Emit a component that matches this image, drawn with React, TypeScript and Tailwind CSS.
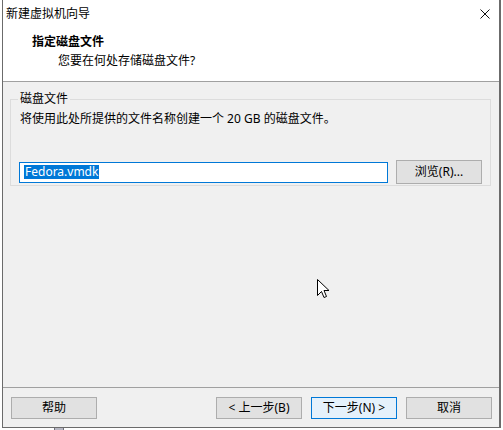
import React from 'react';

const font = "font-['Noto_Sans','Noto_Sans_CJK_SC',sans-serif]";

interface BtnProps {
  label: string;
  isDefault?: boolean;
  className?: string;
}

const Btn: React.FC<BtnProps> = ({ label, isDefault = false, className = '' }) => {
  const cls = [
    'h-[22px] w-[86px] flex items-center justify-center text-[12px] leading-none text-black',
    isDefault ? 'border border-[#0078d7] bg-[#e5f1fb]' : 'border border-[#adadad] bg-[#e1e1e1]',
    className
  ]
    .filter(Boolean)
    .join(' ');
  return (
    <button type="button" className={cls}>
      {label}
    </button>
  );
};

const CloseIcon = () => (
  <svg width="10" height="10" viewBox="0 0 10 10" className="block">
    <path d="M0.5 0.5 L9.5 9.5 M9.5 0.5 L0.5 9.5" stroke="#111" strokeWidth="1" />
  </svg>
);

const Cursor = () => (
  <svg width="13" height="20" viewBox="0 0 13 20" className="block">
    <path
      d="M0.5 0.5 L0.5 16.5 L4.5 12.5 L7 18.5 L9.5 17.5 L7 11.5 L12 11.5 Z"
      fill="#fff"
      stroke="#000"
      strokeWidth="1"
      strokeLinejoin="miter"
    />
  </svg>
);

export default function App() {
  return (
    <div className={`w-[503px] h-[430px] bg-white overflow-hidden relative ${font}`}>
      {/* dialog window */}
      <div className="ml-[2px] w-[499px] h-[428px] border-l border-r-2 border-b border-[#6b6b6b] bg-[#f0f0f0] flex flex-col">
        {/* header */}
        <div className="h-[81px] bg-white relative shrink-0">
          <div className="pt-[6px] pl-[3px] h-[22px] text-[12px] leading-[16px] text-black">新建虚拟机向导</div>
          <div className="absolute left-[477px] top-[9px]">
            <CloseIcon />
          </div>
          <div className="mt-[12px] pl-[29px] text-[12px] leading-[16px] font-bold text-black">指定磁盘文件</div>
          <div className="mt-[3px] pl-[55px] text-[12px] leading-[16px] text-black">您要在何处存储磁盘文件?</div>
        </div>
        <div className="h-px bg-[#a0a0a0] shrink-0" />

        {/* body */}
        <div className="flex-1 flex flex-col">
          <div className="relative mt-[17px] ml-[7px] w-[481px] h-[87px] border border-[#dcdcdc]">
            <span className="absolute left-[7px] top-[-9px] px-[2px] bg-[#f0f0f0] text-[12px] leading-[16px] text-black">
              磁盘文件
            </span>
            <div className="mt-[11px] ml-[9px] text-[12px] leading-[16px] text-black">
              将使用此处所提供的文件名称创建一个 20 GB 的磁盘文件。
            </div>
            <div className="mt-[33px] ml-[8px] flex items-center gap-[8px]">
              <div className="w-[369px] h-[21px] border border-[#0078d7] bg-white flex items-center pl-[4px]">
                <span className="bg-[#0078d7] text-white text-[12px] leading-[14px] h-[14px] px-px">Fedora.vmdk</span>
              </div>
              <Btn label="浏览(R)..." className="h-[24px]" />
            </div>
          </div>
        </div>

        {/* footer */}
        <div className="h-px bg-[#a0a0a0] shrink-0" />
        <div className="h-[39px] shrink-0 flex pt-[9px] pl-[8px]">
          <Btn label="帮助" />
          <Btn label="< 上一步(B)" className="ml-[119px]" />
          <Btn label="下一步(N) >" isDefault className="ml-[9px]" />
          <Btn label="取消" className="ml-[9px]" />
        </div>
      </div>
      <div className="ml-[54px] w-[10px] h-[2px] bg-[#b8b8c4] border-x border-[#70707a]" />

      {/* mouse pointer */}
      <div className="absolute left-[317px] top-[279px]">
        <Cursor />
      </div>
    </div>
  );
}
